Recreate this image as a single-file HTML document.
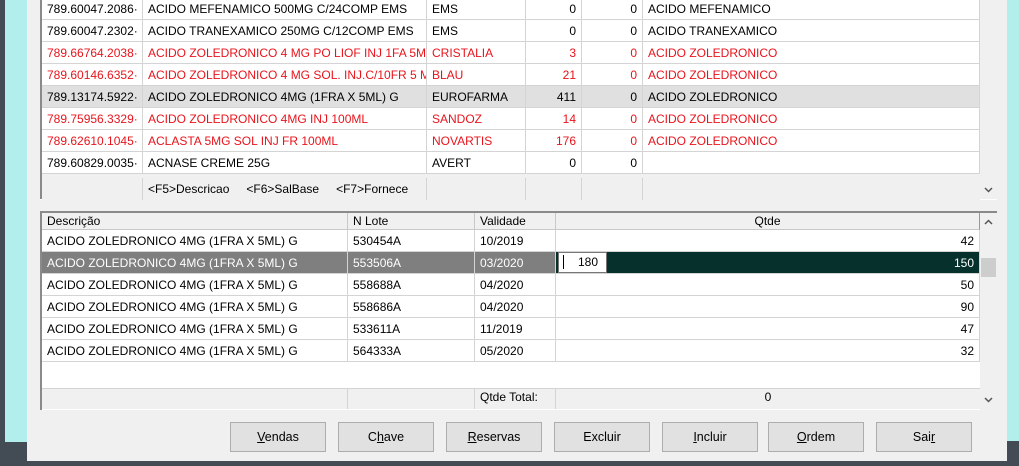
<!DOCTYPE html><html><head><meta charset="utf-8"><style>
*{margin:0;padding:0;box-sizing:border-box}
body{width:1019px;height:466px;overflow:hidden;background:#434b55;position:relative;font-family:"Liberation Sans",Tahoma,sans-serif;font-size:12px;color:#000}
.a{position:absolute}
.row{position:absolute;display:flex;height:22px}
.row div{height:22px;line-height:22px;border-right:1px solid #d4d4d4;border-bottom:1px solid #d4d4d4;padding:0 5px;white-space:nowrap;overflow:hidden;flex:none}
.r{text-align:right}
.red div{color:#e8141c}
.btn{position:absolute;top:422px;width:96px;height:30px;background:#e1e1e1;border:1px solid #adadad;text-align:center;line-height:28px;font-size:12.5px}
u{text-decoration:underline}
svg.ch{position:absolute;width:9px;height:6px}
</style></head><body>
<div class="a" style="left:5px;top:0;width:22px;height:442px;background:#b2eeec"></div>
<div class="a" style="left:1007px;top:0;width:12px;height:441px;background:#b2eeec"></div>
<div class="a" style="left:27px;top:0;width:980px;height:461px;background:#f0f0f0"></div>

<!-- top grid -->
<div class="a" style="left:40px;top:0;width:940px;height:200px;background:#fff;border-left:2px solid #8a8a8a"></div>
<div class="a" style="left:42px;top:174px;width:938px;height:26px;background:#f0f0f0"></div>
<div class="a" style="left:980px;top:0;width:17px;height:200px;background:#f0f0f0"></div>
<svg class="ch" style="left:984px;top:187px" viewBox="0 0 9 6"><path d="M1 1 L4.5 4.5 L8 1" fill="none" stroke="#555" stroke-width="1.5"/></svg>
<div class="a" style="left:40px;top:199px;width:957px;height:1px;background:#fff"></div>

<div class="row" style="left:42px;top:-2px"><div style="width:101px">789.60047.2086·</div><div style="width:284px">ACIDO MEFENAMICO 500MG C/24COMP EMS</div><div style="width:99px">EMS</div><div class="r" style="width:56px">0</div><div class="r" style="width:61px">0</div><div style="width:337px">ACIDO MEFENAMICO</div></div>
<div class="row" style="left:42px;top:20px"><div style="width:101px">789.60047.2302·</div><div style="width:284px">ACIDO TRANEXAMICO 250MG C/12COMP EMS</div><div style="width:99px">EMS</div><div class="r" style="width:56px">0</div><div class="r" style="width:61px">0</div><div style="width:337px">ACIDO TRANEXAMICO</div></div>
<div class="row red" style="left:42px;top:42px"><div style="width:101px">789.66764.2038·</div><div style="width:284px">ACIDO ZOLEDRONICO 4 MG PO LIOF INJ 1FA 5M</div><div style="width:99px">CRISTALIA</div><div class="r" style="width:56px">3</div><div class="r" style="width:61px">0</div><div style="width:337px">ACIDO ZOLEDRONICO</div></div>
<div class="row red" style="left:42px;top:64px"><div style="width:101px">789.60146.6352·</div><div style="width:284px">ACIDO ZOLEDRONICO 4 MG SOL. INJ.C/10FR 5 M</div><div style="width:99px">BLAU</div><div class="r" style="width:56px">21</div><div class="r" style="width:61px">0</div><div style="width:337px">ACIDO ZOLEDRONICO</div></div>
<div class="row" style="left:42px;top:86px;background:#e0e0e0"><div style="width:101px">789.13174.5922·</div><div style="width:284px">ACIDO ZOLEDRONICO 4MG (1FRA X 5ML) G</div><div style="width:99px">EUROFARMA</div><div class="r" style="width:56px">411</div><div class="r" style="width:61px">0</div><div style="width:337px">ACIDO ZOLEDRONICO</div></div>
<div class="row red" style="left:42px;top:108px"><div style="width:101px">789.75956.3329·</div><div style="width:284px">ACIDO ZOLEDRONICO 4MG INJ 100ML</div><div style="width:99px">SANDOZ</div><div class="r" style="width:56px">14</div><div class="r" style="width:61px">0</div><div style="width:337px">ACIDO ZOLEDRONICO</div></div>
<div class="row red" style="left:42px;top:130px"><div style="width:101px">789.62610.1045·</div><div style="width:284px">ACLASTA 5MG SOL INJ FR 100ML</div><div style="width:99px">NOVARTIS</div><div class="r" style="width:56px">176</div><div class="r" style="width:61px">0</div><div style="width:337px">ACIDO ZOLEDRONICO</div></div>
<div class="row" style="left:42px;top:152px"><div style="width:101px">789.60829.0035·</div><div style="width:284px">ACNASE CREME 25G</div><div style="width:99px">AVERT</div><div class="r" style="width:56px">0</div><div class="r" style="width:61px">0</div><div style="width:337px"></div></div>
<div class="row" style="left:42px;top:178px;background:#f0f0f0"><div style="width:101px;border-bottom:0"></div><div style="width:284px;border-bottom:0;word-spacing:0">&lt;F5&gt;Descricao<span style="display:inline-block;width:17px"></span>&lt;F6&gt;SalBase<span style="display:inline-block;width:17px"></span>&lt;F7&gt;Fornece</div><div style="width:99px;border-bottom:0"></div><div style="width:56px;border-bottom:0"></div><div style="width:61px;border-bottom:0"></div><div style="width:337px;border:0"></div></div>

<!-- bottom grid -->
<div class="a" style="left:40px;top:211px;width:957px;height:199px;background:#fff;border-top:2px solid #8a8a8a;border-left:2px solid #8a8a8a"></div>
<div class="a" style="left:980px;top:213px;width:17px;height:197px;background:#f0f0f0"></div>
<div class="a" style="left:981px;top:258px;width:15px;height:19px;background:#cdcdcd"></div>
<svg class="ch" style="left:984px;top:219px" viewBox="0 0 9 6"><path d="M1 5 L4.5 1.5 L8 5" fill="none" stroke="#555" stroke-width="1.5"/></svg>
<svg class="ch" style="left:984px;top:397px" viewBox="0 0 9 6"><path d="M1 1 L4.5 4.5 L8 1" fill="none" stroke="#555" stroke-width="1.5"/></svg>
<div class="row" style="left:42px;top:213px;height:17px;background:#f0f0f0"><div style="width:306px;height:17px;line-height:17px;border-color:#c8c8c8">Descrição</div><div style="width:127px;height:17px;line-height:17px;border-color:#c8c8c8">N Lote</div><div style="width:81px;height:17px;line-height:17px;border-color:#c8c8c8">Validade</div><div style="width:424px;height:17px;line-height:17px;text-align:center;border-color:#c8c8c8;border-right:1px solid #999">Qtde</div></div>

<div class="row" style="left:42px;top:230px"><div style="width:306px">ACIDO ZOLEDRONICO 4MG (1FRA X 5ML) G</div><div style="width:127px">530454A</div><div style="width:81px">10/2019</div><div class="r" style="width:424px">42</div></div>
<div class="row" style="left:42px;top:252px;color:#fff"><div style="width:306px;background:#7f7f7f">ACIDO ZOLEDRONICO 4MG (1FRA X 5ML) G</div><div style="width:127px;background:#7f7f7f">553506A</div><div style="width:81px;background:#7f7f7f">03/2020</div><div class="r" style="width:424px;background:#05302c">150</div></div>
<div class="a" style="left:558px;top:252px;width:49px;height:21px;background:#fff;border:1px solid #777;line-height:19px;padding-left:19px">180</div>
<div class="a" style="left:563px;top:255px;width:1px;height:14px;background:#000"></div>
<div class="row" style="left:42px;top:274px"><div style="width:306px">ACIDO ZOLEDRONICO 4MG (1FRA X 5ML) G</div><div style="width:127px">558688A</div><div style="width:81px">04/2020</div><div class="r" style="width:424px">50</div></div>
<div class="row" style="left:42px;top:296px"><div style="width:306px">ACIDO ZOLEDRONICO 4MG (1FRA X 5ML) G</div><div style="width:127px">558686A</div><div style="width:81px">04/2020</div><div class="r" style="width:424px">90</div></div>
<div class="row" style="left:42px;top:318px"><div style="width:306px">ACIDO ZOLEDRONICO 4MG (1FRA X 5ML) G</div><div style="width:127px">533611A</div><div style="width:81px">11/2019</div><div class="r" style="width:424px">47</div></div>
<div class="row" style="left:42px;top:340px"><div style="width:306px">ACIDO ZOLEDRONICO 4MG (1FRA X 5ML) G</div><div style="width:127px">564333A</div><div style="width:81px">05/2020</div><div class="r" style="width:424px">32</div></div>
<div class="a" style="left:42px;top:388px;width:938px;height:1px;background:#d4d4d4"></div>
<div class="row" style="left:42px;top:389px;height:20px;background:#f0f0f0"><div style="width:306px;height:20px;border-bottom:0"></div><div style="width:127px;height:20px;border-bottom:0"></div><div style="width:81px;height:20px;border-bottom:0;line-height:17px">Qtde Total:</div><div style="width:424px;height:20px;border:0;text-align:center;line-height:17px">0</div></div>

<div class="btn" style="left:230px"><u>V</u>endas</div>
<div class="btn" style="left:338px">C<u>h</u>ave</div>
<div class="btn" style="left:446px"><u>R</u>eservas</div>
<div class="btn" style="left:554px">Excluir</div>
<div class="btn" style="left:662px"><u>I</u>ncluir</div>
<div class="btn" style="left:768px"><u>O</u>rdem</div>
<div class="btn" style="left:876px">Sai<u>r</u></div>
</body></html>
